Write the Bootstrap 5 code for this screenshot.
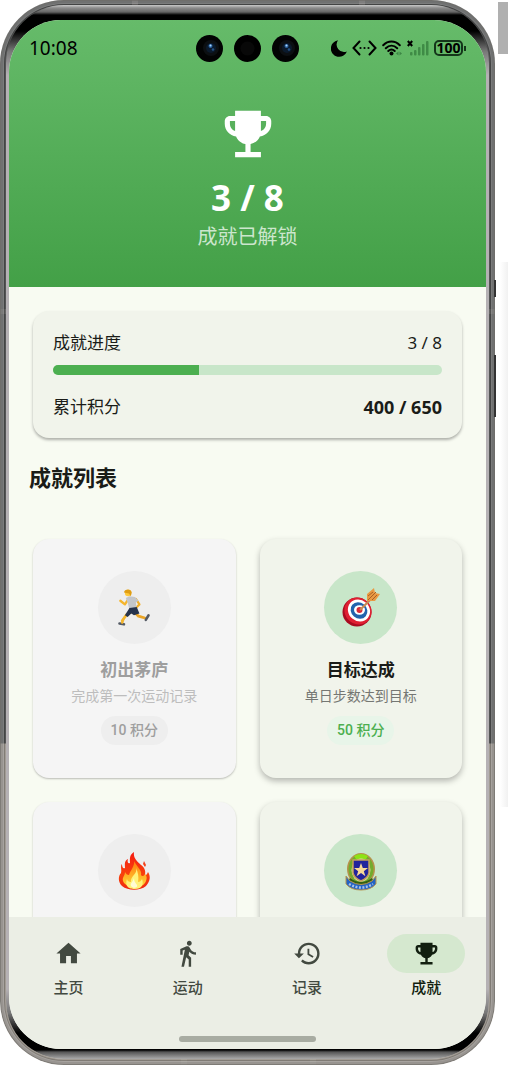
<!DOCTYPE html>
<html lang="zh-CN">
<head>
<meta charset="utf-8">
<meta name="viewport" content="width=device-width, initial-scale=1">
<title>成就</title>
<link href="https://cdn.jsdelivr.net/npm/bootstrap@5.3.0/dist/css/bootstrap.min.css" rel="stylesheet">
<script src="https://cdn.jsdelivr.net/npm/bootstrap@5.3.0/dist/js/bootstrap.bundle.min.js"></script>
<style>
  body { background: #fff; color: #1a1c18; font-family: Roboto, "Noto Sans CJK SC", sans-serif; }

  /* handset: metal rim, dark bezel, screen */
  .stage { height: 100vh; }
  .handset {
    position: relative; padding: 5px 6px 6px; border-radius: 64px;
    background:
      linear-gradient(#777, #777) 132px 0 / 6px 6px no-repeat,
      linear-gradient(#777, #777) 359px 0 / 6px 6px no-repeat,
      linear-gradient(#e4dccf, #e4dccf) 181px 100% / 6px 6px no-repeat,
      linear-gradient(#e4dccf, #e4dccf) 310px 100% / 6px 6px no-repeat,
      linear-gradient(#606262, #606262) 0 309px / 100% 5px no-repeat,
      linear-gradient(#3b3e40 0, #3b3e40 743px, #d6ccbf 744px);
    box-shadow: inset 0 0 0 1px rgba(110,108,104,.6), inset 0 0 0 3px rgba(20,20,20,.1), inset 0 0 0 4px rgba(255,255,255,.3), inset 0 0 0 5px rgba(0,0,0,.2), inset 0 0 0 6px rgba(110,108,106,.5);
  }
  .bezel {
    padding: 15px 3px 10px; border-radius: 58px;
    background: linear-gradient(#c9c9c9 0, #8b8b8b 3px, #666 7px, #000 10px, #000 26px, #777 46px, #b5b1b4 70px, #b5b1b4 calc(100% - 70px), #777 calc(100% - 46px), #000 calc(100% - 26px), #000 calc(100% - 9px), #555 calc(100% - 7px), #aaa 100%);
  }
  .screen { border-radius: 52px; background: #f8fbf2; }
  .rim-key { position: absolute; right: -1px; width: 2px; background: #333; }
  .key-a { top: 280px; height: 17px; }
  .key-b { top: 355px; height: 62px; }
  .gutter { width: 13px; background: linear-gradient(90deg, transparent 5px, #f1f1f1) 0 262px / 100% 545px no-repeat; }
  .gutter-tab { width: 10px; height: 52px; margin-top: 2px; background: #b0b0b0; }

  /* green header */
  .hero { height: 267px; background: linear-gradient(#66bb6a, #43a047); }
  .status { display: grid; grid-template-columns: 1fr auto 1fr; padding: 14px 20px 0; color: #000; }
  .clock { font: 19px/28px "Noto Sans", sans-serif; }
  .lens { width: 27px; height: 27px; }
  .lens-gap { gap: 11px; }
  .sys { gap: 5px; }
  .battery { border: 2px solid #14361a; border-radius: 5px; height: 16px; width: 29px; font: bold 14px/12px "Noto Sans", sans-serif; }
  .nub { width: 2px; height: 5px; background: #14361a; margin-left: 1px; }
  .hero-cup { margin-top: 41px; }
  .hero-count { font: bold 35px/40px "Noto Sans", sans-serif; margin-top: 13px; }
  .hero-note { font-size: 20px; line-height: 28px; margin-top: 5px; color: #cce6cd; }

  /* content */
  .summary { margin: 24px 24px 0; padding: 20px; height: 127px; border-radius: 16px; background: #f1f4eb; box-shadow: 0 2px 3px rgba(0,0,0,.3); font-size: 17px; line-height: 24px; }
  .figure-text { font-family: "Noto Sans", sans-serif; }
  strong.figure-text { font-size: 18px; }
  .progress { --bs-progress-height: 10px; --bs-progress-bg: #c8e6c9; --bs-progress-bar-bg: #4caf50; --bs-progress-border-radius: 5px; margin: 10px 0 20px; }
  .list-title { font-size: 22px; line-height: 32px; font-weight: 700; margin: 25px 20px 44px; }
  .awards { display: grid; grid-template-columns: 1fr 1fr; gap: 24px; padding: 0 24px; }
  .award { min-height: 239px; padding-top: 32px; border-radius: 16px; background: #f1f4eb; box-shadow: 0 3px 6px rgba(0,0,0,.28); }
  .award.locked { background: #f5f5f5; box-shadow: 0 1px 2px rgba(0,0,0,.25); }
  .medal { width: 73px; height: 73px; background: #c8e6c9; }
  .locked .medal { background: #eee; }
  .award-name { font-size: 17px; line-height: 24px; font-weight: 700; margin: 14px 0 0; }
  .award-text { font-size: 14px; line-height: 20px; margin: 4px 0 10px; color: #757773; }
  .points { font-size: 14px; line-height: 29px; font-weight: 500; padding: 0 10px; background: #e8f5e9; color: #4caf50; }
  .locked .award-name { color: #9e9e9e; }
  .locked .award-text { color: #bdbdbd; }
  .locked .points { background: #eee; color: #9e9e9e; }

  /* bottom bar */
  .tabs { height: 132px; padding-top: 17px; background: #ebeee5; }
  .tabs a { color: #424940; font-size: 15px; line-height: 22px; font-weight: 500; text-decoration: none; }
  .tabs a.active { color: #121f10; }
  .tab-pill { width: 78px; height: 39px; margin-bottom: 4px; }
  .active .tab-pill { background: #d5e8cf; }
  .home-bar { width: 137px; height: 6px; margin-bottom: 7px; background: #a8aca2; }
</style>
</head>
<body>
<svg class="d-none">
  <symbol id="cup" viewBox="0 0 24 24"><path fill="currentColor" d="M19 5h-2V3H7v2H5c-1.100 0-2 .9-2 2v1c0 2.550 1.920 4.630 4.390 4.940.63 1.500 1.980 2.630 3.610 2.960V19H7v2h10v-2h-4v-3.100c1.630-.33 2.980-1.460 3.610-2.960C19.080 12.630 21 10.550 21 8V7c0-1.100-.9-2-2-2zM5 8V7h2v3.820C5.840 10.400 5 9.300 5 8zm14 0c0 1.300-.84 2.400-2 2.820V7h2v1z"/></symbol>
  <symbol id="lens" viewBox="0 0 27 27"><circle cx="13.500" cy="13.500" r="13.500" fill="#020303"/><circle cx="15" cy="13" r="8" fill="#0c0f12"/><circle cx="15" cy="13" r="5" fill="#0b1a2c"/><circle cx="14.500" cy="11" r="2" fill="#2b62a0"/><circle cx="14.500" cy="10.500" r="1" fill="#a9d6ff"/><circle cx="17" cy="14.500" r="1.300" fill="#245184"/></symbol>
</svg>

<div class="stage d-flex">
  <div class="handset d-flex flex-grow-1">
    <span class="rim-key key-a"></span><span class="rim-key key-b"></span>
    <div class="bezel d-flex flex-grow-1">
      <div class="screen d-flex flex-column flex-grow-1 overflow-hidden">

        <header class="hero text-center text-white flex-shrink-0">
          <div class="status align-items-center">
            <span class="clock text-start">10:08</span>
            <div class="d-flex lens-gap">
              <svg class="lens"><use href="#lens"/></svg>
              <svg class="lens" viewBox="0 0 27 27"><circle cx="13.500" cy="13.500" r="13.500"/><circle cx="13.500" cy="13.500" r="7" fill="#080808"/></svg>
              <svg class="lens"><use href="#lens"/></svg>
            </div>
            <div class="sys d-flex align-items-center justify-content-end">
              <svg width="16" height="17" viewBox="0 0 16 17"><path d="M7 .3A8.300 8.300 0 1 0 15.900 11.500 7.500 7.500 0 0 1 7 .3z"/></svg>
              <svg width="25" height="16" viewBox="0 0 25 16"><path d="M7.500 1.500 1.500 8l6 6.500M17.500 1.500l6 6.500-6 6.500" fill="none" stroke="#000" stroke-width="2" stroke-linecap="round"/><g><circle cx="8.500" cy="8" r="1.100"/><circle cx="12.500" cy="8" r="1.100"/><circle cx="16.500" cy="8" r="1.100"/></g></svg>
              <svg width="20" height="16" viewBox="0 0 20 16"><g fill="none" stroke="#000" stroke-width="2" stroke-linecap="round"><path d="M1.200 5.200C6 .3 13 .3 17.800 5.200M3.800 8.200c3.400-3.300 8-3.300 11.400 0M6.300 11c2-1.900 4.400-1.900 6.400 0"/></g><circle cx="9.500" cy="13.500" r="2"/><path d="M14 13.500l2.500-2v4zM20 13.500l-2.500-2v4z" fill="#3d8645"/></svg>
              <svg width="22" height="16" viewBox="0 0 22 16"><path d="M.8 1l4.400 5M5.200 1 .8 6" stroke="#000" stroke-width="2"/><g fill="#3f8b46"><rect x="3" y="12" width="2.500" height="3.500" rx="1"/><rect x="7" y="10" width="2.500" height="5.500" rx="1"/><rect x="11" y="7" width="2.500" height="8.500" rx="1"/><rect x="15" y="4" width="2.500" height="11.500" rx="1"/><rect x="19" y="1" width="2.500" height="14.500" rx="1"/></g></svg>
              <div class="d-flex align-items-center"><span class="battery d-flex justify-content-center">100</span><span class="nub"></span></div>
            </div>
          </div>
          <svg class="hero-cup d-block mx-auto" width="62" height="62"><use href="#cup"/></svg>
          <div class="hero-count">3 / 8</div>
          <div class="hero-note">成就已解锁</div>
        </header>

        <main class="flex-grow-1 overflow-hidden">
          <section class="summary">
            <div class="d-flex justify-content-between"><span>成就进度</span><span class="figure-text">3 / 8</span></div>
            <div class="progress" role="progressbar" aria-label="成就进度" aria-valuenow="3" aria-valuemin="0" aria-valuemax="8"><div class="progress-bar" style="width:37.5%"></div></div>
            <div class="d-flex justify-content-between"><span>累计积分</span><strong class="figure-text">400 / 650</strong></div>
          </section>
          <h1 class="list-title">成就列表</h1>
          <div class="awards text-center">
            <article class="award locked">
              <div class="medal rounded-circle mx-auto d-flex align-items-center justify-content-center">
                <svg width="40" height="40" viewBox="0 0 44 42"><g fill="none" stroke-linecap="round" stroke-linejoin="round"><path d="M16 11 12 17 7 13" stroke="#f4b52c" stroke-width="2.600"/><path d="M22 24 14 28 9 35" stroke="#f4b52c" stroke-width="3"/><path d="M21 24l6 6 7 2" stroke="#eba526" stroke-width="3"/><path d="m24 11 4 6-4 4" stroke="#f0ae2a" stroke-width="2.400"/><path d="m6 38 5 1M35 34l3-5" stroke="#555b65" stroke-width="2.800"/><path d="m10 34-1 3" stroke="#f4b52c" stroke-width="2.600"/></g><path d="m13 10 4-2 6 1 4 4-3 2 1 7-8 1-2-8z" fill="#c3c6ca"/><path d="m17 21 8-1 3 7-6 2-3-2-4 4-3-2z" fill="#26334c"/><circle cx="15.500" cy="4.500" r="3.500" fill="#ffc93b"/><path d="M11 4c0-4 8-5 8.500 0l-1 4-2-3z" fill="#df9d13"/></svg>
              </div>
              <h2 class="award-name">初出茅庐</h2>
              <p class="award-text">完成第一次运动记录</p>
              <span class="points rounded-pill d-inline-block">10 积分</span>
            </article>
            <article class="award">
              <div class="medal rounded-circle mx-auto d-flex align-items-center justify-content-center">
                <svg width="40" height="40" viewBox="0 0 40 40"><ellipse cx="16" cy="24" rx="14.500" ry="14.500" fill="#a90b20"/><ellipse cx="17" cy="23" rx="14" ry="13" fill="#df1f32" transform="rotate(40 17 23)"/><ellipse cx="18" cy="22.500" rx="11.500" ry="10.500" fill="#fff" transform="rotate(40 18 22.500)"/><ellipse cx="18" cy="22.500" rx="8.800" ry="7.800" fill="#2263ad" transform="rotate(40 18 22.500)"/><ellipse cx="18.500" cy="22" rx="5.500" ry="4.800" fill="#fff"/><circle cx="18.500" cy="22" r="3" fill="#d82838"/><path d="M19 22 32 9" stroke="#c58a52" stroke-width="2.200"/><path d="M26 13V6l7-6 1 5 5 1-5 7z" fill="#e99a43"/><path d="m27 12 8-8M27 8l5-4M31 12l5-5" stroke="#a96027" fill="none"/></svg>
              </div>
              <h2 class="award-name">目标达成</h2>
              <p class="award-text">单日步数达到目标</p>
              <span class="points rounded-pill d-inline-block">50 积分</span>
            </article>
            <article class="award locked">
              <div class="medal rounded-circle mx-auto d-flex align-items-center justify-content-center">
                <svg width="40" height="40" viewBox="0 0 40 40"><defs><linearGradient id="fl" x1="0" y1="0" x2="0" y2="1"><stop stop-color="#f51b12"/><stop offset=".6" stop-color="#f8410c"/><stop offset="1" stop-color="#ef2a10"/></linearGradient><linearGradient id="fi" x1="0" y1="0" x2="0" y2="1"><stop stop-color="#ff7a0c"/><stop offset="1" stop-color="#ffd83a"/></linearGradient></defs><path fill="url(#fl)" d="M20 1c-5 3-4 7-4 11-2 1-3-1-2-4-4 2-3 5-3 9-2 1-3-1-3-4-2 2 0 6-1 9-3 3-3 9 1 13 6 5 18 5 24 0 4-5 5-9 2-14-1 2-1 3-3 3 1-5-1-8-4-10-4-4-8-7-7-13z"/><path fill="url(#fi)" d="M20 10c1 5-4 10-5 14-2 0-3-1-4-3 0 4-3 5-2 9 3 8 20 9 23 0 1-3 1-5-1-7-1 2-3 3-4 1 1-5-4-8-7-14z"/><path fill="#fff27a" d="M22 17c2 6-6 8-5 14-2 0-4-1-4-3-3 9 4 10 8 10 7 0 9-5 7-10-1 2-2 3-4 3 1-5 0-10-2-14z"/><path fill="#fffbd5" d="M20 27c-1 4-4 5-3 8 2 3 7 2 6-1-1-2-3-3-3-7z"/><path fill="#f3411a" d="m30 10 2 4-1 2-2-3z"/></svg>
              </div>
            </article>
            <article class="award">
              <div class="medal rounded-circle mx-auto d-flex align-items-center justify-content-center">
                <svg width="40" height="40" viewBox="0 0 40 40"><ellipse cx="20" cy="18" rx="14" ry="16" fill="#b7914c"/><ellipse cx="20" cy="18" rx="12.500" ry="14.500" fill="#72ab2d"/><path d="M13 5q7-4 14 0l-2 3H15z" fill="#8de315"/><ellipse cx="20" cy="19" rx="9.500" ry="11.500" fill="#d7ddad"/><path d="M9 27q11 8 22 0l3 5q-14 8-28 0z" fill="#326012"/><path d="M12 9h16v13q-1 5-8 8-7-3-8-8z" fill="#22249c" stroke="#c3a15a" stroke-width="1.500"/><path d="m20 12 1.800 5H27l-4.200 3.200 1.600 5L20 22l-4.400 3.200 1.600-5L13 17h5.200z" fill="#f7d997"/><path d="m5 25 4 5q11 7 22 0l4-5v8q-5 6-15 6T5 33z" fill="#2363c3" stroke="#b8954f"/><path d="M8 33q12 7 24 0" fill="none" stroke="#a9c2e8" stroke-width="2.500" stroke-dasharray="2 1.500"/></svg>
              </div>
            </article>
          </div>
        </main>

        <nav class="tabs d-flex flex-column flex-shrink-0" aria-label="主导航">
          <div class="d-flex">
            <a href="#" class="col d-flex flex-column align-items-center"><span class="tab-pill rounded-pill d-flex align-items-center justify-content-center"><svg width="29" height="29" viewBox="0 0 24 24" fill="currentColor"><path d="M10 20v-6h4v6h5v-8h3L12 3 2 12h3v8z"/></svg></span>主页</a>
            <a href="#" class="col d-flex flex-column align-items-center"><span class="tab-pill rounded-pill d-flex align-items-center justify-content-center"><svg width="29" height="29" viewBox="0 0 24 24" fill="currentColor"><path d="M13.500 5.500c1.100 0 2-.9 2-2s-.9-2-2-2-2 .9-2 2 .9 2 2 2zM9.800 8.900 7 23h2.100l1.800-8 2.100 2v6h2v-7.500l-2.100-2 .6-3C14.800 12 16.800 13 19 13v-2c-1.900 0-3.500-1-4.300-2.400l-1-1.600c-.4-.6-1-1-1.700-1-.3 0-.5.1-.8.1L6 8.300V13h2V9.600l1.800-.7"/></svg></span>运动</a>
            <a href="#" class="col d-flex flex-column align-items-center"><span class="tab-pill rounded-pill d-flex align-items-center justify-content-center"><svg width="29" height="29" viewBox="0 0 24 24" fill="currentColor"><path d="M13 3a9 9 0 0 0-9 9H1l3.890 3.890.07.14L9 12H6c0-3.870 3.130-7 7-7s7 3.130 7 7-3.130 7-7 7c-1.930 0-3.680-.79-4.940-2.060l-1.420 1.420A8.954 8.954 0 0 0 13 21a9 9 0 0 0 0-18zm-1 5v5l4.280 2.540.72-1.210-3.500-2.080V8H12z"/></svg></span>记录</a>
            <a href="#" class="active col d-flex flex-column align-items-center" aria-current="page"><span class="tab-pill rounded-pill d-flex align-items-center justify-content-center"><svg width="29" height="29"><use href="#cup"/></svg></span>成就</a>
          </div>
          <div class="home-bar rounded-pill mx-auto mt-auto"></div>
        </nav>
      </div>
    </div>
  </div>
  <div class="gutter d-flex justify-content-end"><div class="gutter-tab"></div></div>
</div>
</body>
</html>
